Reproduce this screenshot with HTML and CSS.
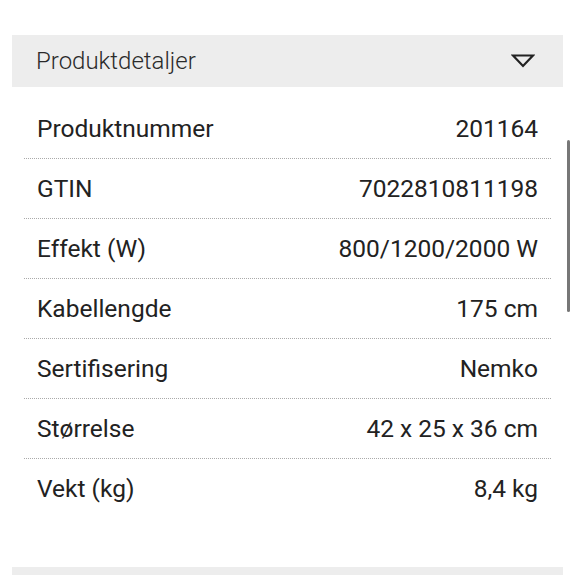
FILE: index.html
```html
<!DOCTYPE html>
<html lang="no">
<head>
    <meta charset="UTF-8">
    <meta name="viewport" content="width=device-width, initial-scale=1.0">
    <title>Produktdetaljer</title>
    <link rel="stylesheet" href="styles.css">
</head>
<body>
    <div class="page">
        <div class="panel">
            <div class="panel-head">
                <span class="panel-title">Produktdetaljer</span>
                <svg class="caret" width="24" height="14" viewBox="0 0 24 14">
                    <path d="M2 1.5 H22 L12 12 Z" fill="none" stroke="#222" stroke-width="2.2" stroke-linejoin="miter"/>
                </svg>
            </div>

            <div class="details">
                <div class="row"><span>Produktnummer</span><span>201164</span></div>
                <div class="row"><span>GTIN</span><span>7022810811198</span></div>
                <div class="row"><span>Effekt (W)</span><span>800/1200/2000 W</span></div>
                <div class="row"><span>Kabellengde</span><span>175 cm</span></div>
                <div class="row"><span>Sertifisering</span><span>Nemko</span></div>
                <div class="row"><span>Størrelse</span><span>42 x 25 x 36 cm</span></div>
                <div class="row"><span>Vekt (kg)</span><span>8,4 kg</span></div>
            </div>
        </div>

        <div class="panel-head next"></div>

        <div class="scrollbar"></div>
    </div>
</body>
</html>
```

FILE: styles.css
```css
body {
    margin: 0;
    padding: 0;
    background: #fff;
    font-family: Roboto, "Noto Sans", sans-serif;
    color: #222;
    overflow: hidden;
}

.page {
    position: relative;
    width: 575px;
    height: 575px;
    padding: 35px 12px 0 12px;
    box-sizing: border-box;
}

.panel-head {
    height: 52px;
    background: #ededed;
    display: flex;
    align-items: center;
    justify-content: space-between;
    padding: 0 28px 0 24px;
}

.panel-title {
    font-size: 24px;
    font-weight: 300;
    color: #2a2a2a;
}

.caret {
    display: block;
}

.details {
    margin: 12px 12px 0 12px;
    height: 468px;
}

.row {
    display: flex;
    justify-content: space-between;
    align-items: center;
    height: 59px;
    padding: 0 13px 0 13px;
    border-bottom: 1px dotted #aaa;
    font-size: 24.5px;
}

.row:last-child {
    border-bottom: none;
}

.next {
    height: 8px;
}

.scrollbar {
    position: absolute;
    left: 567px;
    top: 140px;
    width: 3px;
    height: 172px;
    border-radius: 2px;
    background: #777;
}
```
